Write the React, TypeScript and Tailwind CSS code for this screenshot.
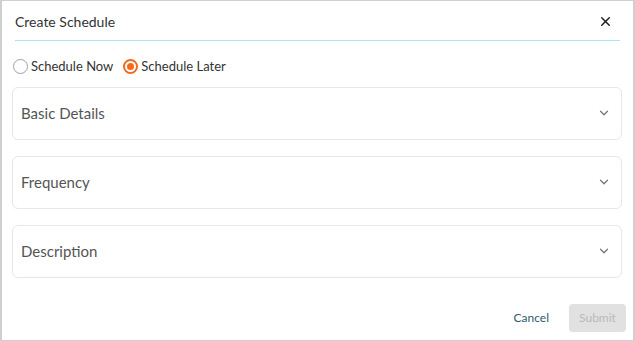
import { ChevronDown, X } from "lucide-react";

function Section({ title }: { title: string }) {
  return (
    <div className="flex h-[53px] items-center justify-between rounded-md border border-[#e4e8ee] pl-[8px] pr-[10px]">
      <span className="text-[15px] text-[#555]">{title}</span>
      <ChevronDown className="h-[14px] w-[14px] text-[#777]" strokeWidth={2.2} />
    </div>
  );
}

function Radio({ label, checked }: { label: string; checked?: boolean }) {
  return (
    <label className="flex items-center gap-[3px]">
      {checked ? (
        <span className="flex h-[15px] w-[15px] items-center justify-center rounded-full border-2 border-[#f26a1b]">
          <span className="h-[7px] w-[7px] rounded-full bg-[#f26a1b]" />
        </span>
      ) : (
        <span className="h-[15px] w-[15px] rounded-full border border-[#9aa3ad]" />
      )}
      <span className="text-[13px] text-[#333]">{label}</span>
    </label>
  );
}

export default function App() {
  return (
    <div
      className="flex h-[341px] w-[635px] flex-col border-y border-l-2 border-r-2 border-[#cfcfcf] bg-white"
      style={{ fontFamily: "Lato, 'Open Sans', sans-serif" }}
    >
      <div className="mx-[13px] flex h-[40px] items-center justify-between border-b border-[#a9e3f7] pt-[1px]">
        <span className="text-[14px] text-[#333]">Create Schedule</span>
        <X className="mr-[7px] h-[15px] w-[15px] text-[#222]" strokeWidth={2.4} />
      </div>
      <div className="mt-[16px] flex items-center gap-[10px] pl-[11px]">
        <Radio label="Schedule Now" />
        <Radio label="Schedule Later" checked />
      </div>
      <div className="ml-[10px] mr-[11px] mt-[10px] flex flex-col gap-[16px]">
        <Section title="Basic Details" />
        <Section title="Frequency" />
        <Section title="Description" />
      </div>
      <div className="mt-auto mb-[8px] flex items-center justify-end gap-[20px] pr-[7px]">
        <button className="text-[12px] text-[#2e5b6e]">Cancel</button>
        <button className="h-[28px] w-[57px] rounded bg-[#e1e1e1] text-[12px] text-[#b9b9b9]">
          Submit
        </button>
      </div>
    </div>
  );
}
